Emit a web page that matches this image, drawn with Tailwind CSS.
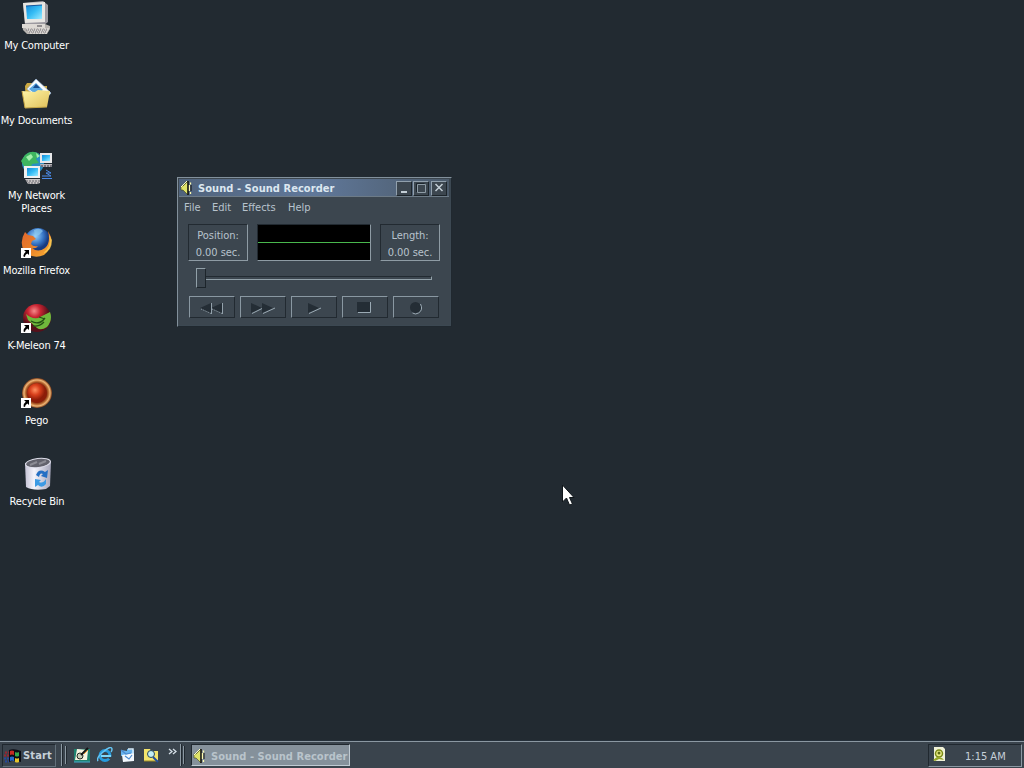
<!DOCTYPE html>
<html lang="en">
<head>
<meta charset="utf-8">
<title>Desktop</title>
<script src="https://cdn.jsdelivr.net/npm/@tailwindcss/browser@4"></script>
</head>
<body class="w-[1024px] h-[768px] overflow-hidden relative flex flex-col bg-[#222a31] text-[11px] leading-[13px] text-white font-['DejaVu_Sans_Condensed','DejaVu_Sans',sans-serif] select-none">
<svg width="0" height="0" class="absolute">
  <defs>
    <linearGradient id="screen" x2="1" y2="1"><stop stop-color="#1688d8"/><stop offset=".5" stop-color="#35bdf5"/><stop offset="1" stop-color="#9deaff"/></linearGradient>
    <linearGradient id="folder" x2="1" y2="1"><stop stop-color="#fff5a8"/><stop offset="1" stop-color="#dfc05a"/></linearGradient>
    <radialGradient id="globe" cx=".4" cy=".3"><stop stop-color="#9bd4fa"/><stop offset=".6" stop-color="#3a78c8"/><stop offset="1" stop-color="#173a80"/></radialGradient>
    <linearGradient id="fox" x2="1" y2="1"><stop stop-color="#e0662e"/><stop offset=".5" stop-color="#e8802a"/><stop offset="1" stop-color="#f9b233"/></linearGradient>
    <radialGradient id="red" cx=".4" cy=".25"><stop stop-color="#f58a8a"/><stop offset=".45" stop-color="#c92432"/><stop offset="1" stop-color="#56101a"/></radialGradient>
    <radialGradient id="ring"><stop offset=".6" stop-color="#6a1a08"/><stop offset=".75" stop-color="#b5622c"/><stop offset=".87" stop-color="#efb878"/><stop offset="1" stop-color="#7a3a18"/></radialGradient>
    <radialGradient id="knob" cx=".4" cy=".35"><stop stop-color="#ff9060"/><stop offset=".5" stop-color="#d8401c"/><stop offset="1" stop-color="#8c1c08"/></radialGradient>
    <linearGradient id="bin" x2="1"><stop stop-color="#c4c2d4"/><stop offset=".35" stop-color="#f4f4fc"/><stop offset="1" stop-color="#a6a6ba"/></linearGradient>
    <g id="shortcut"><path fill="#fff" d="M0 0h10v10H0z"/><path d="M3 2h5v5L6.500 5.500Q4 6.500 4 9L2.500 8.500Q2 6 4.800 3.800z" fill="#000"/></g>
    <g id="speaker"><path d="M1 6h2l5-5v14L3 10H1z" fill="#dfe36a" stroke="#3c3f18" stroke-width=".6"/><path d="M8 1v14" stroke="#111" stroke-width="1.500"/><path d="M7 1L1 7" stroke="#ffffc8"/><path d="M9.500 5v6M10.500 2.500v2M10.500 12v2" stroke="#fffcb0" stroke-width="1.300"/><path d="M11 5v6" stroke="#111"/></g>
  </defs>
</svg>

<main class="flex-1 min-h-0">
  <ul class="w-[73px] flex flex-col text-center whitespace-nowrap tracking-[-0.2px]">
    <li class="h-[75px] flex flex-col items-center">
      <svg width="34" height="38" viewBox="0 0 34 38" class="shrink-0 -ml-px"><path d="M4 3L24 1l5 4v17l-4 3H6z" fill="#9c9aa0"/><path d="M4 3L26 2v20L6 23z" fill="#e8e6e2"/><path d="M7 6l16-1v14L8 19z" fill="url(#screen)"/><path d="M7 6l16-1" stroke="#15569c"/><path d="M3 24h23l5 2v3l-3 5H8l-4-4z" fill="#b8b4b0"/><path d="M3 24h23v4H3z" fill="#dedad5"/><path d="M7 29h23M9 31h20M11 33h17" stroke="#f4f2ee" stroke-dasharray="2 1"/><path d="M7 30h22M10 32h18" stroke="#77737c" stroke-dasharray="1 1"/><path d="M18 26h5" stroke="#44424a"/></svg>
      <span class="pt-px">My Computer</span>
    </li>
    <li class="h-[75px] flex flex-col items-center">
      <svg width="34" height="38" viewBox="0 0 34 38" class="shrink-0 -ml-px"><path d="M6 11l2-3h6l2 3h12v21H7z" fill="#cda942"/><path d="M17 4l15 14-8 9L8 14z" fill="#f8fcff" stroke="#9bb4d4" stroke-width=".7"/><path d="M17 8l7 7-7 5-7-6z" fill="#5aa8e2"/><path d="M17 9l4 4h-7z" fill="#174d8f"/><path d="M3 16l13 1 3-2 12 1-3 16-22 1z" fill="url(#folder)"/><path d="M3 16l3 17 22-1" fill="none" stroke="#c7a746"/></svg>
      <span class="pt-px">My Documents</span>
    </li>
    <li class="h-[75px] flex flex-col items-center">
      <svg width="34" height="38" viewBox="0 0 34 38" class="shrink-0 -ml-px"><circle cx="14" cy="13" r="11" fill="#2a8fc4"/><path d="M6 5q7-6 14-1l-3 5 3 4-7 1-2 6-5-2-4-7z" fill="#3fb55f"/><path d="M7 7l5-3 2 3-4 4zM17 3l4 3-3 2z" fill="#a2efab"/><path d="M21 3h12v10H21z" fill="#e8e8ea"/><path d="M23 5h8v6h-8z" fill="url(#screen)"/><path d="M21 14h12v3H22z" fill="#b8b4b8"/><path d="M22 16h11" stroke="#343440" stroke-dasharray="2 1"/><path d="M5 16h16v12H5z" fill="#f0f0f0"/><path d="M8 18h11v8H8z" fill="url(#screen)"/><path d="M6 29h15v4l-3 1H9z" fill="#c8c4c4"/><path d="M7 31h14M9 33h11" stroke="#66666e" stroke-dasharray="2 1"/><path d="M23 26h9l-5-3h5l-5-3M23 28.500h10" stroke="#4a8ae8" fill="none"/></svg>
      <span class="pt-px">My Network<br>Places</span>
    </li>
    <li class="h-[75px] flex flex-col items-center">
      <svg width="34" height="38" viewBox="0 0 34 38" class="shrink-0 -ml-[3px]"><circle cx="20" cy="16" r="13" fill="url(#globe)"/><path d="M16 5q6-3 9 1l-4 4-4 1z" fill="#8cc8ee" opacity=".7"/><path d="M7 7Q1 17 6 26q9 9 20 4 9-7 7-18l-3-6q3 12-3 17-7 5-13 0 4 1 6-2-5 1-7-2l1-3 4-2-3-3-5-1z" fill="url(#fox)"/><path d="M31 10q3 12-6 18 9-1 9-13z" fill="#ffd35a" opacity=".7"/><use href="#shortcut" x="3" y="23"/></svg>
      <span class="pt-px">Mozilla Firefox</span>
    </li>
    <li class="h-[75px] flex flex-col items-center">
      <svg width="34" height="38" viewBox="0 0 34 38" class="shrink-0 -ml-[3px]"><circle cx="19" cy="18" r="14" fill="url(#red)"/><path d="M8 14q5 5 12 4l12-6q3 8-3 15-6 4-10 1L10 20z" fill="#70b83c"/><path d="M13 21q8 5 14-3M21 17l6 2M15 26q6 1 11-4" stroke="#244f14" stroke-width="1.300" fill="none"/><use href="#shortcut" x="3" y="23"/></svg>
      <span class="pt-px">K-Meleon 74</span>
    </li>
    <li class="h-[75px] flex flex-col items-center">
      <svg width="34" height="38" viewBox="0 0 34 38" class="shrink-0 -ml-[3px]"><circle cx="19" cy="18" r="15" fill="url(#ring)"/><circle cx="19" cy="18" r="10" fill="url(#knob)"/><use href="#shortcut" x="3" y="23"/></svg>
      <span class="pt-px">Pego</span>
    </li>
    <li class="h-[75px] pt-[6px] flex flex-col items-center">
      <svg width="34" height="38" viewBox="0 0 34 38" class="shrink-0 -ml-[2px]"><path d="M6 7l1 24q7 4 20 2l4-3 1-25z" fill="url(#bin)"/><ellipse cx="19" cy="7" rx="12.500" ry="4.500" fill="#62626c" stroke="#dedeea" transform="rotate(-7 19 7)"/><path d="M11 9l7-3M20 8l7-3" stroke="#8c8c94" stroke-width="2"/><path d="M17 19q3-7 9-3l3-2-1 8-6-2 2-2q-3-2-4 3z" fill="#246fc4"/><path d="M16 23l6 1-2 2q4 2 7-3v5q-4 5-8 1l-3 2z" fill="#3c9ae4"/></svg>
      <span class="pt-px ml-px">Recycle Bin</span>
    </li>
  </ul>
</main>

<section class="absolute left-[177px] top-[177px] w-[275px] h-[150px] bg-[#3c464f] border border-t-[#82909b] border-l-[#82909b] border-r-[#20282f] border-b-[#20282f] text-[#b8c3cd]">
  <div class="h-full border-r border-b border-[#3c4852] pt-px pl-px pr-px">
    <header class="h-[18px] pl-px flex items-center bg-linear-to-r from-[#50637c] via-[#60789a] via-50% to-[#4c5b6b] border-b border-[#6d7b87]">
      <svg width="16" height="16" viewBox="0 0 16 16" class="shrink-0"><use href="#speaker"/></svg>
      <h1 class="ml-[2px] pt-px flex-1 whitespace-nowrap font-bold tracking-[0.06px] text-[#dce7f0]">Sound - Sound Recorder</h1>
      <div class="flex pr-[2px] pt-px text-[#c3ced6]">
        <button class="w-4 h-[15px] bg-[#3c464f] border border-t-[#91a0ad] border-l-[#91a0ad] border-r-[#1d252b] border-b-[#1d252b]"><svg width="14" height="13"><path d="M4 9h6v2H4z" fill="currentColor"/></svg></button>
        <button class="ml-px w-4 h-[15px] bg-[#3c464f] border border-t-[#91a0ad] border-l-[#91a0ad] border-r-[#1d252b] border-b-[#1d252b]"><svg width="14" height="13"><path d="M3.500 2.500h8v8h-8z" stroke="#8d9ba5" fill="none"/><path d="M2.500 10V1.500h8" stroke="#1c252c" fill="none"/></svg></button>
        <button class="ml-[2px] w-4 h-[15px] bg-[#3c464f] border border-t-[#91a0ad] border-l-[#91a0ad] border-r-[#1d252b] border-b-[#1d252b]"><svg width="14" height="13"><path d="M3.500 2l7 7M10.500 2l-7 7" stroke="currentColor" stroke-width="1.500"/></svg></button>
      </div>
    </header>
    <nav class="h-5 flex items-center pl-[5px]">
      <span class="w-7">File</span><span class="w-[30px]">Edit</span><span class="w-[46px]">Effects</span><span>Help</span>
    </nav>
    <div class="mt-[7px] ml-[9px] flex">
      <div class="w-[60px] h-[37px] pt-[2px] border border-t-[#222a31] border-l-[#222a31] border-r-[#8e9ba4] border-b-[#8e9ba4] text-center leading-[17px] whitespace-nowrap tracking-[-0.05px]">Position:<br>0.00 sec.</div>
      <div class="ml-[9px] w-[114px] h-[37px] bg-black border border-t-[#222a31] border-l-[#222a31] border-r-[#8e9ba4] border-b-[#8e9ba4] pt-[17px]"><div class="h-px bg-[#49b84d]"></div></div>
      <div class="ml-[9px] w-[60px] h-[37px] pt-[2px] border border-t-[#222a31] border-l-[#222a31] border-r-[#8e9ba4] border-b-[#8e9ba4] text-center leading-[17px] whitespace-nowrap tracking-[-0.05px]">Length:<br>0.00 sec.</div>
    </div>
    <div class="mt-[6px] ml-[17px] flex items-center h-[22px]">
      <div class="w-[10px] h-[20px] bg-[#3c464f] border border-t-[#91a0a8] border-l-[#91a0a8] border-r-[#1d252b] border-b-[#1d252b]"></div>
      <div class="w-[226px] h-1 border border-t-[#222a31] border-l-0 border-r-[#91a0a8] border-b-[#91a0a8]"></div>
    </div>
    <div class="mt-[7px] ml-[10px] flex gap-[5px]">
      <button class="w-[46px] h-[22px] border border-t-[#8a98a2] border-l-[#8a98a2] border-r-[#222a31] border-b-[#222a31]"><svg width="44" height="20"><path d="M10 11l11-5v10zM21 11l11-5v10z" fill="#242d35"/><path d="M11 12l10 4.500M22 12l10 4.500" stroke="#94a2ac" fill="none" stroke-dasharray="1 1"/><path d="M21.500 6v11M32.500 6v11" stroke="#94a2ac"/></svg></button>
      <button class="w-[46px] h-[22px] border border-t-[#8a98a2] border-l-[#8a98a2] border-r-[#222a31] border-b-[#222a31]"><svg width="44" height="20"><path d="M10 6l11 5-11 5zM21 6l11 5-11 5z" fill="#242d35"/><path d="M11 16.500l10-5M22 16.500l12-5.500" stroke="#9baab4" fill="none"/></svg></button>
      <button class="w-[46px] h-[22px] border border-t-[#8a98a2] border-l-[#8a98a2] border-r-[#222a31] border-b-[#222a31]"><svg width="44" height="20"><path d="M16 6l11 5-11 5z" fill="#242d35"/><path d="M17 16.500l12-5.500" stroke="#9baab4" fill="none"/></svg></button>
      <button class="w-[46px] h-[22px] border border-t-[#8a98a2] border-l-[#8a98a2] border-r-[#222a31] border-b-[#222a31]"><svg width="44" height="20"><path d="M14 5h13v10H14z" fill="#242d35"/><path d="M15 15.500h12.500V5" stroke="#9baab4" fill="none"/></svg></button>
      <button class="w-[46px] h-[22px] border border-t-[#8a98a2] border-l-[#8a98a2] border-r-[#222a31] border-b-[#222a31]"><svg width="44" height="20"><circle cx="21.500" cy="10.500" r="5.500" fill="#242d35"/><path d="M26.500 7q3 6-2 9-3 2-6 0" stroke="#9baab4" fill="none"/></svg></button>
    </div>
  </div>
</section>

<svg class="absolute left-[562px] top-[484px]" width="13" height="22" viewBox="0 0 13 22"><path d="M.5 1v17l4-4 3 7 3-1-3-6.500H12z" fill="#fff" stroke="#11171b"/></svg>

<footer class="h-7 bg-[#3a444d] border-t border-[#25303a]">
  <div class="h-[27px] border-t border-[#8b98a2] pt-[2px] flex items-start text-[#c6d0d8]">
    <button class="ml-[2px] w-[54px] h-[23px] flex items-center border border-[#20282f] border-r-[#63717b] border-b-[#63717b] font-bold">
      <svg width="19" height="18" viewBox="0 0 19 18" class="shrink-0"><path d="M6 3q5-2 12 1v11q-7-3-12 0z" fill="#0a0c14"/><path d="M7 4q2-1 4 0v4q-2-1-4 0z" fill="#c42c24"/><path d="M12 5q2 1 4 0v4q-2 1-4 0z" fill="#32a84c"/><path d="M7 10q2-1 4 0v4q-2-1-4 0z" fill="#2468cc"/><path d="M12 11q2 1 4 0v4q-2 1-4 0z" fill="#e6c42c"/><path d="M2 5.500h4M1 8.500h5" stroke="#9b2430" stroke-width="2" stroke-dasharray="2 1"/><path d="M1 11.500h5M2 14.500h4" stroke="#2448a0" stroke-width="2" stroke-dasharray="2 1"/></svg>
      <span class="ml-px tracking-[0.15px]">Start</span>
    </button>
    <div class="ml-[5px] w-px h-[22px] bg-[#8b98a2]"></div><div class="w-px h-[22px] bg-[#20282f]"></div>
    <div class="mt-[2px] ml-[2px] w-px h-[18px] bg-[#8b98a2]"></div><div class="mt-[2px] w-px h-[18px] bg-[#20282f]"></div>
    <div class="ml-[7px] mt-[3px] flex gap-[7px]">
      <svg width="16" height="16" viewBox="0 0 16 16"><path d="M0 2h16v13H0z" fill="#20826f"/><path d="M3 2l11 1-1 10H1z" fill="#f8f4e2"/><circle cx="6" cy="9" r="3" fill="#c9ceb8" stroke="#242a24"/><path d="M7 8l7-7" stroke="#151515" stroke-width="2"/><path d="M10 7l4-4" stroke="#ef9c32"/><path d="M0 15h16" stroke="#44acd0"/></svg>
      <svg width="16" height="16" viewBox="0 0 16 16"><circle cx="8" cy="8.500" r="5" fill="none" stroke="#269cdf" stroke-width="3"/><path d="M4 9h10" stroke="#7ed8fa" stroke-width="2"/><path d="M11 10h5v2h-4z" fill="#3a444d"/><path d="M1 14Q-1 11 6 5q8-7 9-3 0 2-1 3" fill="none" stroke="#65c4f2" stroke-width="1.500"/></svg>
      <svg width="16" height="16" viewBox="0 0 16 16"><path d="M1 3l6 1V2l7 1v7l-7-1H1z" fill="#68b4ed"/><path d="M2 8l12-2v8L3 15z" fill="#f2f8fd"/><path d="M5 9l4 3 3-4M1 3l5 4 5-1" fill="none" stroke="#4a8ad0" stroke-width="1.200"/><path d="M8 2h5v5" fill="none" stroke="#d7edfc" stroke-width="1.500"/></svg>
      <svg width="16" height="16" viewBox="0 0 16 16"><path d="M1 2h6l1 2h7v10H1z" fill="#f3e46c"/><path d="M1 14h14" stroke="#9e8c28"/><circle cx="8" cy="7" r="3.500" fill="#c1edf5" stroke="#26485b"/><path d="M10 10l5 5" stroke="#234e9c" stroke-width="2"/></svg>
    </div>
    <svg class="ml-[9px] mt-[4px]" width="9" height="8"><path d="M1 1l3 2.500-3 2.500M5 1l3 2.500-3 2.500" stroke="#d6e0e8" stroke-width="1.300" fill="none"/></svg>
    <div class="ml-[3px] w-px h-[22px] bg-[#8b98a2]"></div><div class="w-px h-[22px] bg-[#20282f]"></div>
    <div class="mt-[2px] ml-px w-px h-[18px] bg-[#8b98a2]"></div><div class="mt-[2px] w-px h-[18px] bg-[#20282f]"></div>
    <button class="ml-[6px] w-[159px] h-[22px] flex items-center bg-[#85919b] border border-t-[#20282f] border-l-[#20282f] border-r-[#c0cbd3] border-b-[#c0cbd3] font-bold text-[#b9c4cb] whitespace-nowrap overflow-hidden">
      <svg width="16" height="16" viewBox="0 0 16 16" class="shrink-0"><use href="#speaker" x="1" y="1"/></svg>
      <span class="ml-[3px] pt-[2px] tracking-[0.06px]">Sound - Sound Recorder</span>
    </button>
    <div class="ml-auto mr-[2px] w-[94px] h-[23px] flex items-center border border-t-[#20282f] border-l-[#20282f] border-r-[#8b98a2] border-b-[#8b98a2]">
      <svg width="16" height="16" viewBox="0 0 16 16" class="ml-[2px] -mt-px shrink-0"><path d="M3 0h9l2 2v12H3z" fill="#f0f2d8"/><circle cx="8" cy="6.500" r="3.500" fill="#edf08a" stroke="#7b8b18" stroke-width="1.500"/><circle cx="8" cy="6" r="1.500" fill="#5c6a14"/><path d="M2 13l4-3 5 1 2 2-5-1-4 2z" fill="#94a626"/></svg>
      <span class="ml-[18px] pt-[2px] whitespace-nowrap">1:15 AM</span>
    </div>
  </div>
</footer>
</body>
</html>
